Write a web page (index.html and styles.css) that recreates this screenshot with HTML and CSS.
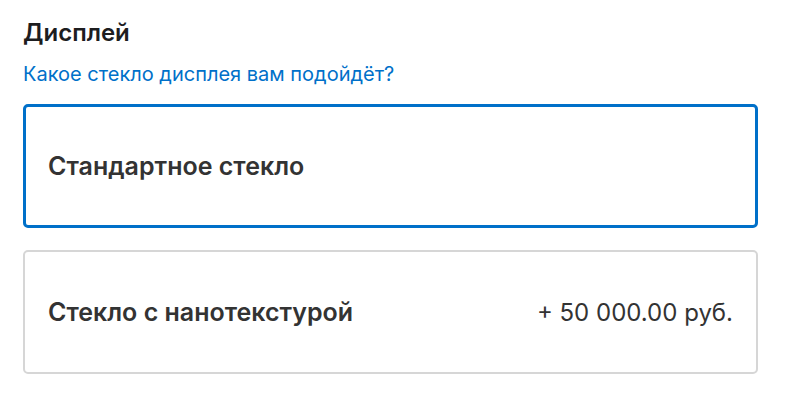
FILE: index.html
```html
<!DOCTYPE html>
<html>
<head>
  <meta charset="utf-8">
  <title>Дисплей</title>
  <link rel="stylesheet" href="styles.css">
</head>
<body>

  <section class="group">
    <h2 class="group-title">Дисплей</h2>
    <a href="#" class="help-link">Какое стекло дисплея вам подойдёт?</a>

    <div class="options">
      <label class="option selected">
        <span class="option-name">Стандартное стекло</span>
      </label>
      <label class="option">
        <span class="option-name">Стекло с нанотекстурой</span>
        <span class="option-price">+ 50 000.00 руб.</span>
      </label>
    </div>
  </section>

</body>
</html>
```

FILE: styles.css
```css
body {
  margin: 0;
  background: #fff;
  font-family: Inter, "Noto Sans", Arial, sans-serif;
  color: #333;
}

.group {
  padding: 18px 43px 0 23px;
}

.group-title {
  margin: 0;
  font-size: 24px;
  font-weight: 600;
  color: #1d1d1f;
  line-height: 30px;
}

.help-link {
  display: inline-block;
  margin-top: 14px;
  font-size: 20px;
  line-height: 24px;
  color: #0070c9;
  text-decoration: none;
}

.options {
  display: flex;
  flex-direction: column;
  gap: 22px;
  margin-top: 18px;
}

.option {
  display: flex;
  align-items: center;
  justify-content: space-between;
  height: 124px;
  box-sizing: border-box;
  padding: 0 23px;
  border: 2px solid #d6d6d6;
  border-radius: 5px;
}

.option.selected {
  border: 3px solid #0070c9;
  padding: 0 22px;
}

.option-name {
  font-size: 25px;
  font-weight: 600;
  color: #333;
}

.option-price {
  font-size: 24px;
  color: #333;
}
```
